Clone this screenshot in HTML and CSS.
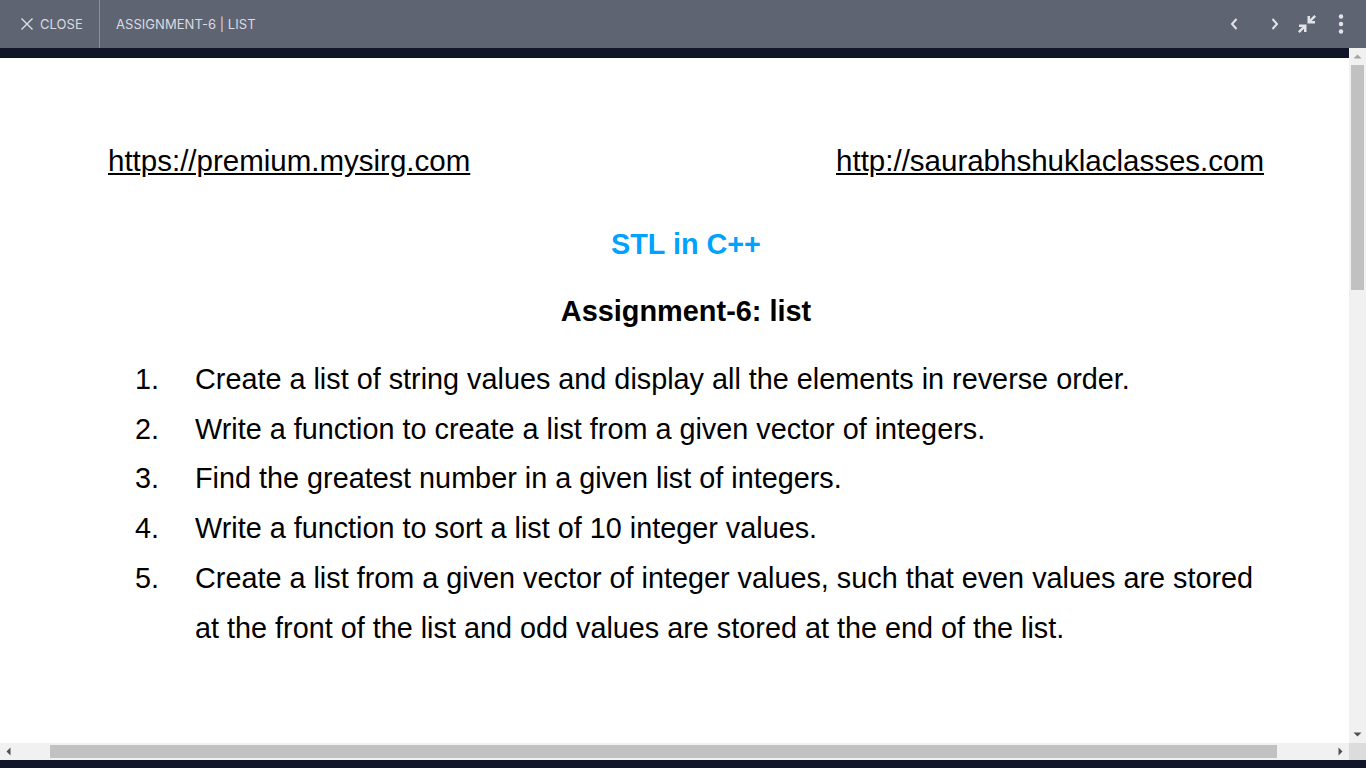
FILE: index.html
```html
<!DOCTYPE html>
<html lang="en">
<head>
<meta charset="utf-8">
<title>Assignment-6 | List</title>
<link rel="stylesheet" href="styles.css">
</head>
<body>
<div class="shell">
  <header class="topbar">
    <div class="close">
      <svg class="x" width="14" height="14" viewBox="0 0 14 14"><path d="M1.5 1.5 12.5 12.5M12.5 1.5 1.5 12.5" stroke="#dfe1e5" stroke-width="1.4" fill="none"/></svg>
      <span>CLOSE</span>
    </div>
    <div class="title">ASSIGNMENT-6 | LIST</div>
    <div class="tools">
      <svg class="prev" width="10" height="14" viewBox="0 0 10 14"><path d="M7.5 2 3 7l4.500 5" stroke="#e3e4e8" stroke-width="2" fill="none"/></svg>
      <svg class="next" width="10" height="14" viewBox="0 0 10 14"><path d="M2.500 2 7 7l-4.500 5" stroke="#e3e4e8" stroke-width="2" fill="none"/></svg>
      <svg class="shrink" width="20" height="20" viewBox="0 0 20 20"><path d="M10.500 9.500H18V7h-3.300L19 2.700 17.300 1 13 5.300V2h-2.500zM9.500 10.500H2V13h3.300L1 17.300 2.700 19 7 14.700V18h2.500z" fill="#e3e4e8"/></svg>
      <svg class="more" width="6" height="20" viewBox="0 0 6 20"><circle cx="3" cy="2.500" r="2.200" fill="#e3e4e8"/><circle cx="3" cy="10" r="2.200" fill="#e3e4e8"/><circle cx="3" cy="17.500" r="2.200" fill="#e3e4e8"/></svg>
    </div>
  </header>
  <div class="viewer">
    <div class="strip"></div>
    <div class="vscroll">
      <svg width="17" height="17" viewBox="0 0 17 17"><path d="M4.500 10.500 8.500 6.500l4 4z" fill="#a3a3a3"/></svg>
      <div class="vtrack"><div class="vthumb"></div></div>
      <svg width="17" height="17" viewBox="0 0 17 17"><path d="M4.500 6.500h8l-4 4z" fill="#505050"/></svg>
    </div>
    <main class="page">
      <div class="links">
        <a href="#">https://premium.mysirg.com</a>
        <a href="#">http://saurabhshuklaclasses.com</a>
      </div>
      <h1>STL in C++</h1>
      <h2>Assignment-6: list</h2>
      <ol>
        <li><span>Create a list of string values and display all the elements in reverse order.</span></li>
        <li><span>Write a function to create a list from a given vector of integers.</span></li>
        <li><span>Find the greatest number in a given list of integers.</span></li>
        <li><span>Write a function to sort a list of 10 integer values.</span></li>
        <li><span>Create a list from a given vector of integer values, such that even values are stored at the front of the list and odd values are stored at the end of the list.</span></li>
      </ol>
    </main>
  </div>
  <div class="hscroll">
    <svg width="17" height="17" viewBox="0 0 17 17"><path d="M10.500 4.500v8l-4-4z" fill="#505050"/></svg>
    <div class="htrack"><div class="hthumb"></div></div>
    <svg width="17" height="17" viewBox="0 0 17 17"><path d="M6.500 4.500v8l4-4z" fill="#505050"/></svg>
    <div class="corner"></div>
  </div>
  <div class="footer"></div>
</div>
</body>
</html>
```
FILE: styles.css
```css
* { box-sizing: border-box; }
html, body { margin: 0; height: 100%; overflow: hidden; }
.shell { width: 1366px; height: 768px; display: flex; flex-direction: column; background: #fff; }

.topbar { height: 48px; flex: none; display: flex; align-items: center; background: #5f6472; color: #d9dbe0; font-family: Inter, "Liberation Sans", sans-serif; font-size: 13px; letter-spacing: 0.05px; }
.close { width: 100px; height: 48px; padding-left: 20px; display: flex; align-items: center; gap: 6px; border-right: 1px solid #8b8f9a; }
.title { padding-left: 16px; flex: 1; }
.tools { display: flex; align-items: center; padding-right: 22px; }
.prev { margin-right: 31px; }
.next { margin-right: 17px; }
.more { margin-left: 21px; }

.viewer { position: relative; flex: 1; min-height: 0; display: grid; grid-template-columns: 1fr 17px; grid-template-rows: 10px 1fr; }
.strip { grid-column: 1; grid-row: 1; background: #111629; }
.vscroll { grid-column: 2; grid-row: 1 / 3; display: flex; flex-direction: column; background: #f1f1f1; }
.vtrack { flex: 1; padding: 0 2px; }
.vthumb { height: 225px; background: #c1c1c1; }
.page { grid-column: 1; grid-row: 2; min-height: 0; overflow: hidden; padding: 85px 85px 0 108px; font-family: "Liberation Sans", Arial, sans-serif; font-size: 28.8px; color: #000; background: #fff; }

.links { display: flex; justify-content: space-between; line-height: 36px; font-size: 29.5px; }
.links a { color: #000; text-decoration: underline; }
h1 { margin: 47px 0 0; text-align: center; font-size: 28.8px; line-height: 36px; font-weight: 700; color: #00a2ff; }
h2 { margin: 31px 0 0; text-align: center; font-size: 28.9px; line-height: 36px; font-weight: 700; }
ol { margin: 26px 0 0; padding: 0 0 0 27px; line-height: 49.7px; list-style: none; counter-reset: item; }
li { display: flex; counter-increment: item; }
li::before { content: counter(item) "."; flex: none; width: 60px; }

.hscroll { height: 17px; flex: none; display: flex; background: #f1f1f1; }
.htrack { flex: 1; padding: 2px 0 2px 33px; }
.hthumb { width: 1227px; height: 13px; background: #c1c1c1; }
.corner { width: 17px; background: #dcdcdc; }
.footer { height: 8px; flex: none; background: #111629; }
```
